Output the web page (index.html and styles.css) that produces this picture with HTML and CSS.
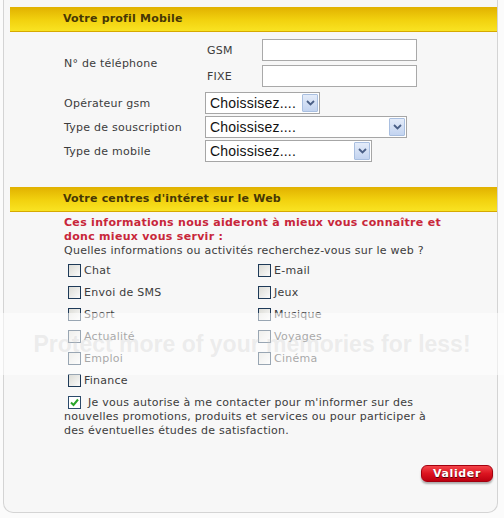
FILE: index.html
```html
<!DOCTYPE html>
<html lang="fr">
<head>
<meta charset="utf-8">
<title>Votre profil Mobile</title>
<link rel="stylesheet" href="styles.css">
</head>
<body>
<div class="panel">
  <div class="hdr">Votre profil Mobile</div>
  <div class="profil">
    <div class="row phone">
      <div class="lbl">N° de téléphone</div>
      <div class="phones">
        <div class="pr"><span class="pl">GSM</span><span class="inp"></span></div>
        <div class="pr"><span class="pl">FIXE</span><span class="inp"></span></div>
      </div>
    </div>
    <div class="selects">
      <div class="row">
        <div class="lbl">Opérateur gsm</div>
        <div class="sel w1"><span class="st">Choissisez....</span><span class="btn"><svg width="9" height="6" viewBox="0 0 9 6"><path d="M1 1 L4.5 4.5 L8 1" fill="none" stroke="#4a5f86" stroke-width="1.8"/></svg></span></div>
      </div>
      <div class="row">
        <div class="lbl">Type de souscription</div>
        <div class="sel w2"><span class="st">Choissisez....</span><span class="btn"><svg width="9" height="6" viewBox="0 0 9 6"><path d="M1 1 L4.5 4.5 L8 1" fill="none" stroke="#4a5f86" stroke-width="1.8"/></svg></span></div>
      </div>
      <div class="row">
        <div class="lbl">Type de mobile</div>
        <div class="sel w3"><span class="st">Choissisez....</span><span class="btn"><svg width="9" height="6" viewBox="0 0 9 6"><path d="M1 1 L4.5 4.5 L8 1" fill="none" stroke="#4a5f86" stroke-width="1.8"/></svg></span></div>
      </div>
    </div>
  </div>

  <div class="hdr hdr2">Votre centres d'intéret sur le Web</div>
  <div class="interest">
    <p class="red">Ces informations nous aideront à mieux vous connaître et<br>donc mieux vous servir :</p>
    <p class="q">Quelles informations ou activités recherchez-vous sur le web ?</p>
    <div class="checks">
      <div class="ck"><span class="cb"></span>Chat</div>
      <div class="ck"><span class="cb"></span>E-mail</div>
      <div class="ck"><span class="cb"></span>Envoi de SMS</div>
      <div class="ck"><span class="cb"></span>Jeux</div>
      <div class="ck"><span class="cb"></span>Sport</div>
      <div class="ck"><span class="cb"></span>Musique</div>
      <div class="ck"><span class="cb"></span>Actualité</div>
      <div class="ck"><span class="cb"></span>Voyages</div>
      <div class="ck"><span class="cb"></span>Emploi</div>
      <div class="ck"><span class="cb"></span>Cinéma</div>
      <div class="ck"><span class="cb"></span>Finance</div>
    </div>
    <p class="consent"><span class="cb on"><svg width="11" height="11" viewBox="0 0 11 11"><path d="M2 5.5 L4.5 8 L9 2.5" fill="none" stroke="#2aa52a" stroke-width="2"/></svg></span>Je vous autorise à me contacter pour m'informer sur des<br>nouvelles promotions, produits et services ou pour participer à<br>des éventuelles études de satisfaction.</p>
    <div class="actions"><button class="valider" type="button">Valider</button></div>
  </div>
</div>
<div class="band"><span>Protect more of your memories for less!</span></div>
</body>
</html>
```
FILE: styles.css
```css
html, body {
  margin: 0;
  padding: 0;
}
body {
  background: #fbfbfb;
  font-family: "DejaVu Sans", Verdana, sans-serif;
  font-size: 11px;
  letter-spacing: 0.25px;
  color: #3c3c3c;
  position: relative;
  width: 504px;
  height: 518px;
  overflow: hidden;
}
.panel {
  position: relative;
  margin-left: 3px;
  width: 495px;
  height: 513px;
  box-sizing: border-box;
  border: 1px solid #d4d4d4;
  border-top: 0;
  border-radius: 0 0 10px 10px;
  background: #f7f7f7;
  padding: 7px 0 0 6px;
}
.hdr {
  height: 24px;
  line-height: 24px;
  border-bottom: 1px solid #d6a900;
  background: linear-gradient(#e1b100, #f2d20f 55%, #f9e322);
  padding-left: 53px;
  font-weight: bold;
  letter-spacing: 0.2px;
  color: #473705;
}
.hdr2 {
  margin-top: 25px;
}
.profil {
  padding: 7px 0 0 54px;
}
.row {
  display: grid;
  grid-template-columns: 141px auto;
  align-items: center;
}
.lbl {
  color: #3c3c3c;
}
.phones {
  display: flex;
  flex-direction: column;
  gap: 4px;
}
.pr {
  display: flex;
  align-items: center;
}
.pl {
  width: 55px;
  padding-left: 2px;
}
.inp {
  width: 153px;
  height: 20px;
  border: 1px solid #a9a9a9;
  background: #fff;
}
.selects {
  margin-top: 5px;
  display: flex;
  flex-direction: column;
  gap: 2px;
}
.sel {
  display: flex;
  align-items: center;
  height: 20px;
  border: 1px solid #a6a6a6;
  background: #fff;
  box-sizing: content-box;
}
.w1 { width: 113px; }
.w2 { width: 200px; }
.w3 { width: 165px; }
.st {
  flex: 1;
  padding-left: 4px;
  font-family: "Liberation Sans", Arial, sans-serif;
  font-size: 14px;
  letter-spacing: 0.2px;
  line-height: 20px;
  color: #111;
  white-space: nowrap;
  overflow: hidden;
}
.btn {
  width: 14px;
  height: 16px;
  margin: 1px;
  border: 1px solid #a9bfe0;
  border-radius: 1px;
  background: linear-gradient(#e4ecf9, #c3d4f0);
  display: flex;
  align-items: center;
  justify-content: center;
}
.interest {
  padding: 4px 4px 0 54px;
}
.interest p {
  margin: 0;
  line-height: 14px;
}
.red {
  color: #c8263a;
  font-weight: bold;
  font-size: 11px;
  letter-spacing: 0.3px;
}
.q {
  color: #3c3c3c;
}
.checks {
  margin-top: 1px;
  padding-left: 4px;
  display: grid;
  grid-template-columns: 190px 190px;
  grid-auto-rows: 22px;
  align-items: center;
}
.ck {
  display: flex;
  align-items: center;
  color: #3c3c3c;
}
.cb {
  width: 11px;
  height: 11px;
  border: 1px solid #1e3a58;
  background: linear-gradient(135deg, #dcdcd6, #fafafa);
  margin-right: 3px;
  flex: none;
}
.consent {
  margin-top: 5px !important;
}
.consent .cb {
  display: inline-flex;
  align-items: center;
  justify-content: center;
  vertical-align: -2px;
  margin-left: 4px;
  margin-right: 7px;
  background: #fff;
  border-color: #2b4a6b;
}
.actions {
  margin-top: 27px;
  display: flex;
  justify-content: flex-end;
}
.valider {
  width: 72px;
  height: 17px;
  padding: 0;
  border: 1px solid #a3000f;
  border-radius: 6px;
  background: linear-gradient(#f4454a, #dc1420 50%, #bd0010);
  color: #fff;
  font-family: "DejaVu Sans", Verdana, sans-serif;
  font-weight: bold;
  font-size: 11px;
  letter-spacing: 0.6px;
  text-shadow: 0 1px 0 #5a0008;
  box-shadow: 0 2px 2px rgba(0, 0, 0, 0.3);
}
.band {
  position: absolute;
  left: 0;
  top: 313px;
  width: 504px;
  height: 62px;
  background: rgba(255, 255, 255, 0.55);
  display: flex;
  align-items: center;
  justify-content: center;
}
.band span {
  font-family: "Liberation Sans", Arial, sans-serif;
  font-weight: bold;
  font-size: 23px;
  letter-spacing: 0;
  color: rgba(200, 200, 200, 0.3);
  white-space: nowrap;
}
```
